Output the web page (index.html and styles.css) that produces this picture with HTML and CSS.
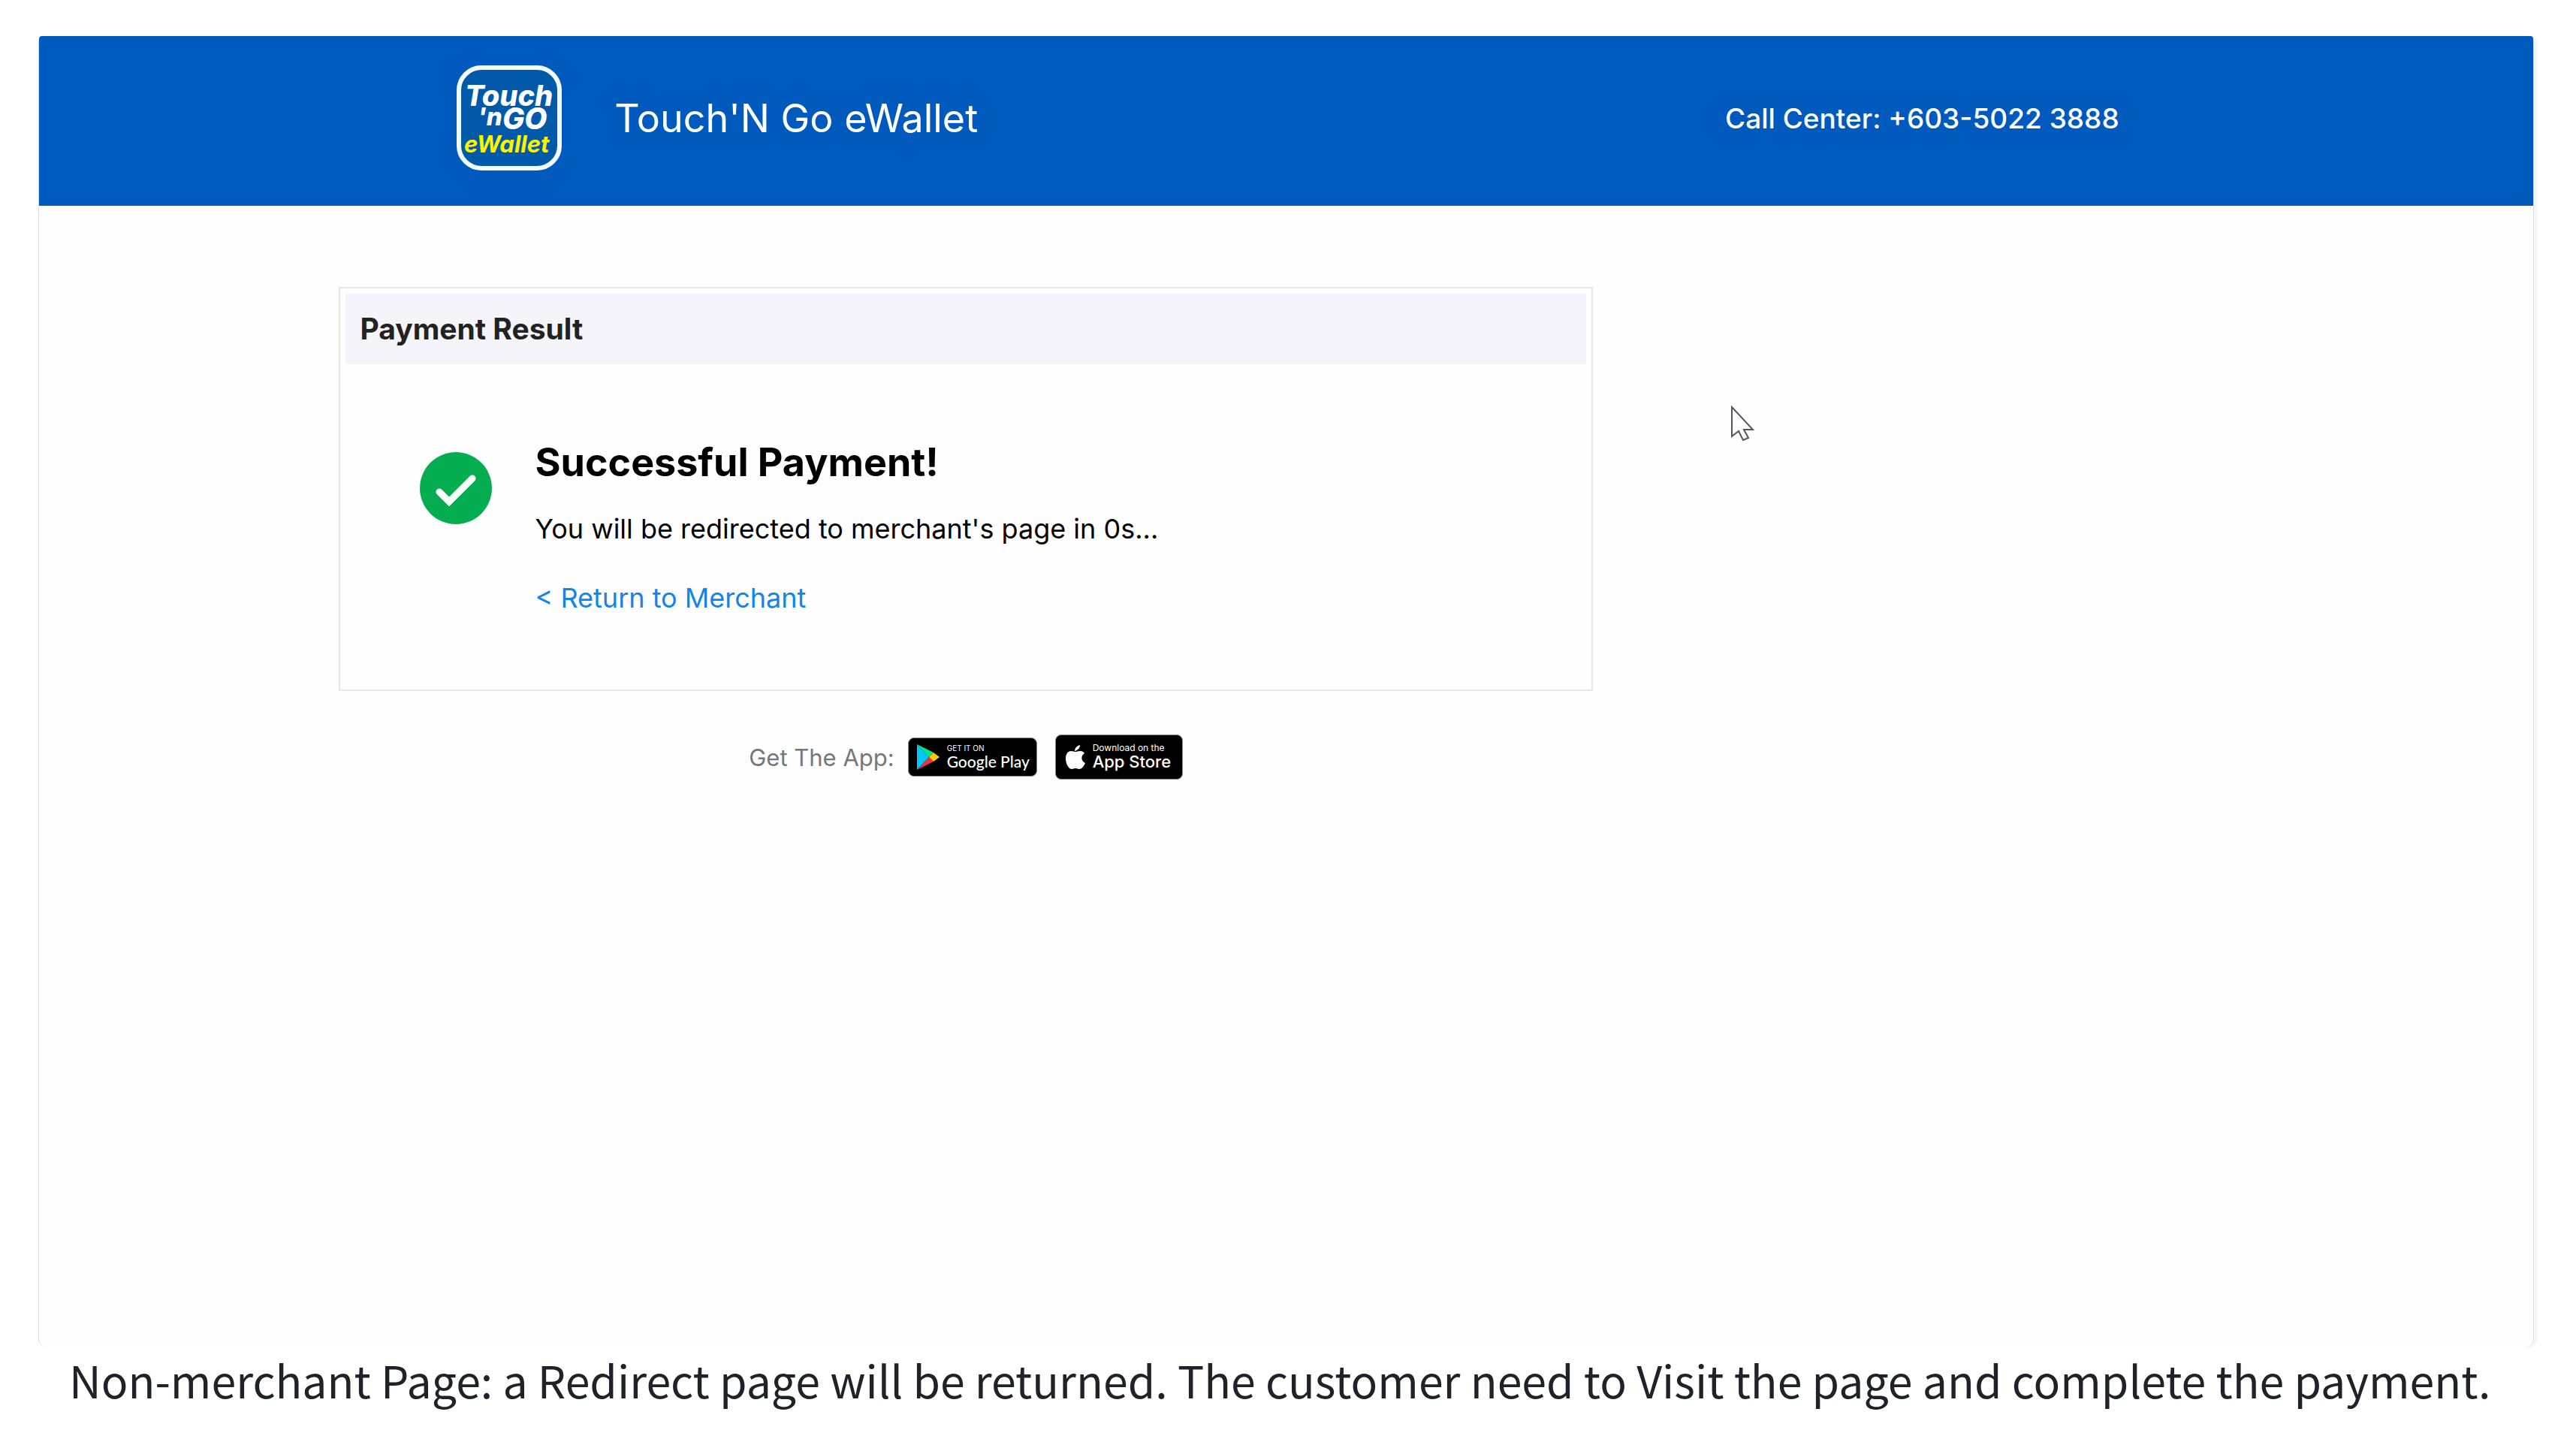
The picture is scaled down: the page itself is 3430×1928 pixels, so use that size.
FILE: index.html
```html
<!DOCTYPE html>
<html lang="en">
<head>
  <meta charset="UTF-8">
  <meta name="viewport" content="width=device-width, initial-scale=1.0">
  <title>Payment Result</title>
  <link rel="stylesheet" href="styles.css">
</head>
<body>

  <div class="screen">
    <!-- Header -->
    <header>
      <div class="header-inner">
        <svg class="logo" viewBox="0 0 140 140" role="img" aria-label="Touch'n Go eWallet">
          <rect x="3" y="3" width="134" height="134" rx="30" fill="#005aa9" stroke="#f2fbff" stroke-width="6"/>
          <g class="logo-text">
            <text x="11" y="54" font-size="38">Touch</text>
            <text x="28" y="80" font-size="33">'n</text>
            <text x="61" y="85" font-size="39">GO</text>
            <text class="logo-yellow" x="10" y="116" font-size="31">eWallet</text>
          </g>
        </svg>
        <h1>Touch'N Go eWallet</h1>
        <p class="call-center">Call Center: +603-5022 3888</p>
      </div>
    </header>

    <!-- Payment Result -->
    <main>
      <section class="card">
        <h2>Payment Result</h2>
        <div class="result">
          <svg class="check" viewBox="0 0 96 96" aria-hidden="true">
            <circle cx="48" cy="48" r="48" fill="#04ae50"/>
            <path d="M26 53 L39 66 L70 35" fill="none" stroke="#fff" stroke-width="9" stroke-linecap="round"/>
          </svg>
          <div class="message">
            <h3>Successful Payment!</h3>
            <p>You will be redirected to merchant's page in 0s...</p>
            <a class="return" href="#">&lt; Return to Merchant</a>
          </div>
        </div>
      </section>

      <!-- App links -->
      <div class="apps">
        <span>Get The App:</span>
        <a class="badge google" href="#">
          <svg viewBox="0 0 30 36" width="30" height="36" aria-hidden="true">
            <path d="M0 1 V35 L16 18 Z" fill="#00c8f8"/>
            <path d="M0 1 L16 18 L22 12 Z" fill="#00e887"/>
            <path d="M0 35 L16 18 L22 24 Z" fill="#e8344a"/>
            <path d="M22 12 L16 18 L22 24 L30 18 Z" fill="#ffc800"/>
          </svg>
          <span class="badge-text"><small>GET IT ON</small><b>Google Play</b></span>
        </a>
        <a class="badge apple" href="#">
          <svg viewBox="0 0 26 32" width="26" height="32" aria-hidden="true">
            <path d="M19 0 C19 4 16 7 12 8 C12 4 15 1 19 0 Z M13 9 C15 9 16 8 19 8 C22 8 24 9 25 11 C20 14 20 21 26 24 C24 29 21 32 18 32 C16 32 15 31 13 31 C11 31 10 32 8 32 C4 32 0 25 0 18 C0 12 3 8 7 8 C10 8 11 9 13 9 Z" fill="#fff"/>
          </svg>
          <span class="badge-text"><small>Download on the</small><b>App Store</b></span>
        </a>
      </div>
    </main>

    <!-- Mouse pointer over the page -->
    <svg class="pointer" viewBox="0 0 32 48" aria-hidden="true">
      <path d="M2 2 V41 L11 34 L17 46 L24 43 L18 32 H30 Z" fill="#fff" stroke="#55555f" stroke-width="2"/>
    </svg>
  </div>

  <p class="caption">Non-merchant Page: a Redirect page will be returned. The customer need to Visit the page and complete the payment.</p>

</body>
</html>
```

FILE: styles.css
```css
* {
  box-sizing: border-box;
}
body {
  font-family: Inter, sans-serif;
  margin: 0;
  padding: 48px 48px 0;
  min-height: 100vh;
  display: flex;
  flex-direction: column;
  background-color: white;
  color: #000;
}
h1, h2, h3, p {
  margin: 0;
}
a {
  text-decoration: none;
}
.screen {
  position: relative;
  flex: 1;
  margin: 0 8px 0 3px;
  border: 1px solid #dcdcdc;
  border-width: 0 1px;
  border-radius: 8px 8px 12px 12px;
  background-color: #fefefe;
  box-shadow: 5px 0 0 #f6f6f6;
}
header {
  background-color: #005abe;
  color: white;
  border-radius: 4px 4px 0 0;
}
.header-inner {
  width: 66.8%;
  height: 226px;
  margin: 0 auto;
  padding: 0 0 8px 5px;
  display: flex;
  align-items: center;
}
.logo {
  width: 140px;
  height: 140px;
}
.logo-text {
  font-weight: 800;
  font-style: italic;
  fill: white;
}
.logo-yellow {
  font-weight: 700;
  fill: #fff200;
}
h1 {
  margin-left: 70px;
  font-size: 52px;
  font-weight: 400;
}
.call-center {
  margin-left: auto;
  font-size: 37px;
  font-weight: 500;
}
main {
  width: 76%;
  margin: 0 auto;
  padding-top: 108px;
}
.card {
  width: 66.2%;
  border: 2px solid #e6e6e6;
  padding: 7px;
}
h2 {
  padding: 0 20px;
  font-size: 39px;
  font-weight: 700;
  line-height: 94px;
  background-color: #f5f4fa;
  color: #222;
}
.result {
  display: flex;
  gap: 58px;
  padding: 95px 99px 91px;
}
.check {
  flex: none;
  width: 96px;
  height: 96px;
  margin-top: 22px;
}
.message {
  font-size: 36px;
  line-height: 48px;
}
h3 {
  margin-bottom: 28px;
  font-size: 52px;
  font-weight: 700;
  line-height: 72px;
}
.return {
  display: block;
  margin-top: 44px;
  color: #1484e8;
}
.apps {
  width: 66.2%;
  margin-top: 58px;
  display: flex;
  justify-content: center;
  align-items: center;
  font-size: 31px;
  color: #777;
}
.badge {
  display: flex;
  align-items: center;
  border-radius: 8px;
  border: 1px solid #888;
  background-color: #000;
  color: white;
}
.google {
  width: 172px;
  height: 52px;
  margin: 0 24px 0 18px;
  padding-left: 11px;
  gap: 10px;
}
.apple {
  width: 170px;
  height: 60px;
  padding-left: 13px;
  gap: 10px;
}
.badge-text {
  display: flex;
  flex-direction: column;
  white-space: nowrap;
}
.badge small {
  font-size: 12px;
  line-height: 12px;
}
.badge b {
  font-size: 22px;
  font-weight: 500;
  line-height: 24px;
}
.google small {
  font-size: 10px;
}
.google b {
  font-family: Lato, sans-serif;
  font-size: 21px;
}
.pointer {
  position: absolute;
  left: 2252px;
  top: 492px;
  width: 32px;
  height: 48px;
}
.caption {
  padding: 0 44px 48px;
  font-family: "Noto Sans CJK SC", sans-serif;
  font-size: 59px;
  line-height: 86px;
  color: #1f2329;
}
```
